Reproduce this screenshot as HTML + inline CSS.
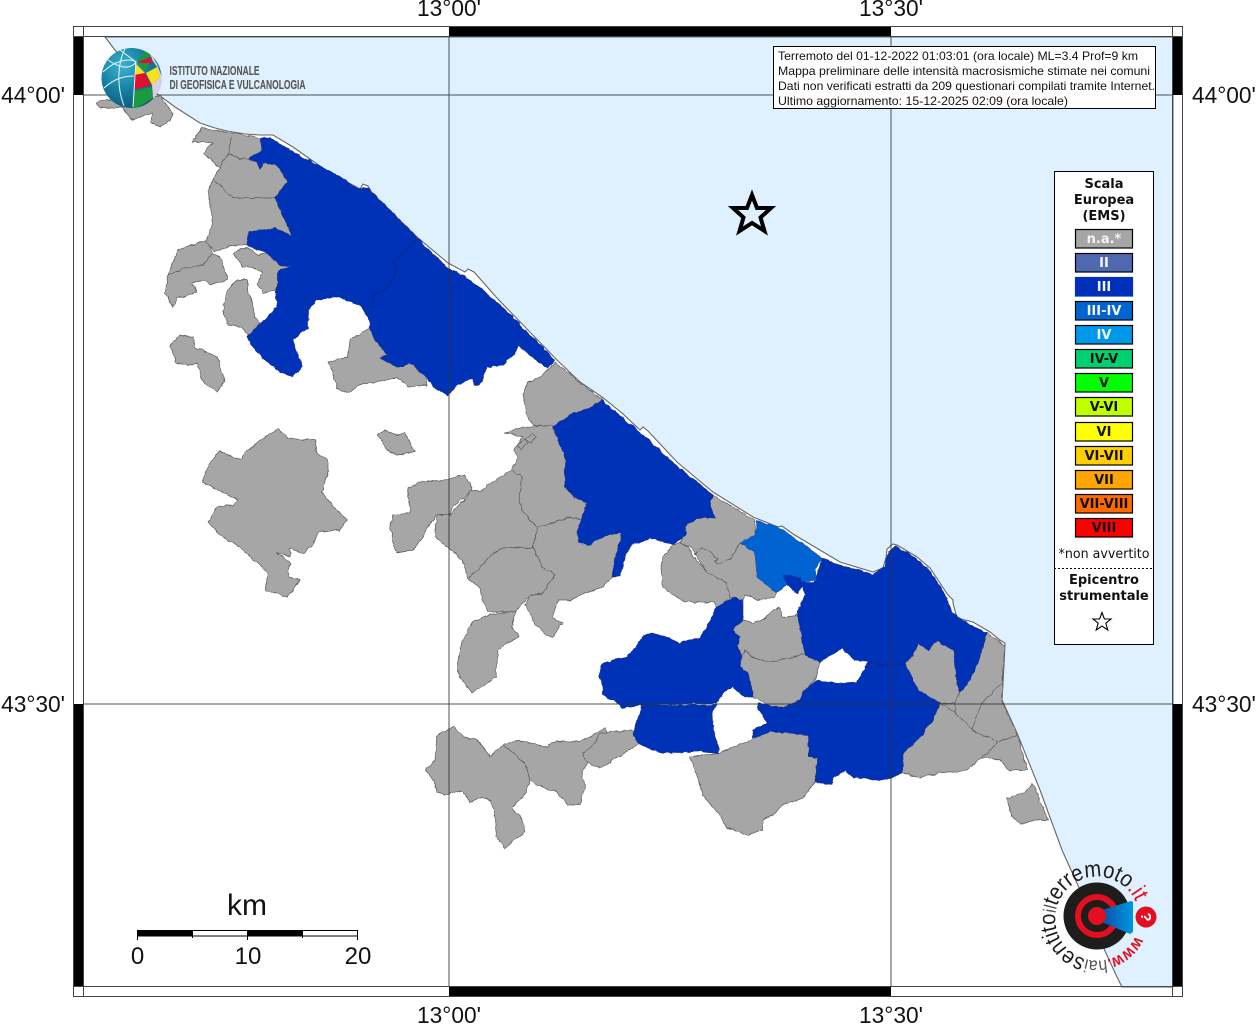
<!DOCTYPE html>
<html><head><meta charset="utf-8"><style>
html,body{margin:0;padding:0;background:#fff;width:1256px;height:1024px;overflow:hidden}
svg{display:block}
</style></head><body>
<svg xmlns="http://www.w3.org/2000/svg" width="1256" height="1024" viewBox="0 0 1256 1024" font-family="'Liberation Sans',sans-serif">
<defs>
<radialGradient id="gl" cx="35%" cy="30%" r="80%"><stop offset="0" stop-color="#3cb4cf"/><stop offset=".55" stop-color="#127a9f"/><stop offset="1" stop-color="#0b5570"/></radialGradient>
<linearGradient id="cone" x1="0" x2="1" y1="0" y2="0"><stop offset="0" stop-color="#0a4fa8"/><stop offset="1" stop-color="#0098e0"/></linearGradient>
<clipPath id="gc"><circle cx="131.5" cy="78" r="30"/></clipPath>
<filter id="rough" filterUnits="userSpaceOnUse" x="0" y="0" width="1256" height="1024">
<feTurbulence type="fractalNoise" baseFrequency=".16" numOctaves="2" seed="4" result="n"/>
<feDisplacementMap in="SourceGraphic" in2="n" scale="3.5" xChannelSelector="R" yChannelSelector="G"/>
</filter>
</defs>
<rect width="1256" height="1024" fill="#fff"/>
<!-- sea -->
<path fill="#dff1ff" stroke="#666" stroke-width="1.1" d="M105,37 115,50 125,62 140,80 160,96 175,107 200,123 215,128 227,131 245,134 260,135 273,135 293,147 327,171 360,189 363,184 368,186 372,193 417,237 448,263 465,272 468,269 474,272 497,298 557,360 580,382 602,397 622,413 640,430 643,427 648,431 677,462 713,492 753,517 778,527 782,526 793,534 840,562 873,572 883,568 886,558 887,549 893,544 897,545 917,557 930,568 948,595 953,600 953,603 957,618 973,622 990,632 1000,640 1005,643 1004,665 1002,700 1017,733 1040,790 1062,850 1080,890 1100,940 1117,977 1122,987 1173,987 1173,37Z"/>
<g filter="url(#rough)">
<!-- gray -->
<g fill="#a6a6a6" stroke="#5c5c5c" stroke-width=".7" stroke-linejoin="round">
<path d="M97,103 102,100 130,100 160,96 173,113 170,120 160,127 150,122 153,113 140,117 132,120 125,112 123,107 112,108 100,108Z"/>
<path d="M192,142 202,128 227,132 260,138 262,150 249,159 240,159 228,153 220,168 203,153 213,143 202,142Z"/>
<path d="M228,153 240,159 249,159 257,162 260,170 263,163 277,165 288,182 275,198 292,236 275,228 249,232 247,245 233,245 215,252 205,242 213,223 208,190 213,180Z"/>
<path d="M205,240 178,250 168,275 165,293 173,307 177,298 188,295 197,292 192,283 205,280 210,285 228,280 220,257 213,253Z"/>
<path d="M233,253 247,247 258,255 267,253 280,265 292,267 278,270 278,283 275,290 263,293 257,283 262,273 253,267 243,267Z"/>
<path d="M228,290 237,280 247,280 248,293 252,302 255,317 260,323 250,337 242,327 228,325 223,310Z"/>
<path d="M170,345 180,335 193,337 195,347 218,357 225,382 217,392 203,382 197,363 187,365 175,362 173,352Z"/>
<path d="M328,362 348,357 350,340 370,328 373,337 387,355 380,358 397,367 410,363 427,377 427,385 408,387 397,377 373,383 360,385 347,393 337,388 333,373Z"/>
<path d="M555,362 548,370 540,377 527,383 523,395 525,403 527,415 533,425 553,427 568,422 573,413 590,408 602,400 580,382Z"/>
<path d="M505,433 523,427 553,425 565,453 565,487 575,498 586,502 583,520 570,517 538,528 523,513 519,498 522,477 511,470 518,457 514,450 523,437Z"/>
<path d="M408,488 420,482 443,480 465,475 472,490 453,507 450,515 437,515 427,528 423,537 413,550 397,553 393,543 390,527 393,515 410,513Z"/>
<path d="M437,515 450,515 472,490 480,491 511,470 522,477 519,498 523,513 538,528 533,547 523,548 508,547 498,550 487,560 468,579 462,560 453,552 435,537Z"/>
<path d="M468,579 487,560 498,550 508,547 523,548 533,548 542,567 555,575 543,593 530,595 515,612 488,612 482,600 480,588Z"/>
<path d="M533,547 538,528 570,517 583,520 577,535 583,545 593,537 622,533 615,560 612,577 603,587 585,593 570,600 558,600 552,618 563,623 552,638 537,627 525,605 530,595 543,593 555,575 542,567Z"/>
<path d="M472,622 490,615 515,611 512,627 519,637 507,643 498,650 496,677 480,688 472,693 460,677 457,665 462,642Z"/>
<path d="M202,482 210,462 220,451 240,460 245,453 260,440 278,429 288,438 315,440 317,453 328,460 328,470 322,492 330,503 347,520 340,530 318,532 313,545 303,553 290,548 290,557 277,552 290,563 288,577 300,580 288,597 265,590 268,573 260,565 237,545 220,535 208,523 217,507 233,505 238,500 228,495 215,488Z"/>
<path d="M378,435 385,430 395,435 405,433 415,452 397,455 387,450Z"/>
<path d="M425,770 435,760 437,735 453,727 465,737 478,740 490,757 503,745 525,763 530,780 525,795 512,808 522,820 525,832 505,848 497,837 495,813 490,800 482,797 470,802 462,790 445,795 437,792 435,782Z"/>
<path d="M503,745 517,740 547,747 552,742 580,742 605,728 608,733 592,747 582,753 588,763 582,773 585,787 580,805 568,805 557,792 537,785 530,780 525,763Z"/>
<path d="M582,753 592,747 600,733 632,730 640,743 618,757 600,768 588,763Z"/>
<path d="M713,495 755,520 755,535 740,543 732,557 718,565 715,562 717,558 702,547 697,550 695,555 692,547 680,543 685,525 702,517 715,518 710,503Z"/>
<path d="M673,545 663,557 661,568 663,588 685,602 713,602 717,608 732,597 727,583 707,572 693,557 689,547 680,543Z"/>
<path d="M695,555 702,547 717,558 715,562 718,565 732,557 740,543 755,553 757,577 777,593 775,597 757,600 745,595 743,600 730,597 727,583 707,572Z"/>
<path d="M743,620 753,623 765,618 773,610 780,608 783,617 797,615 801,627 805,653 790,658 770,662 753,658 745,650 741,657 737,647 740,637 732,630Z"/>
<path d="M741,657 745,650 753,658 770,662 790,658 805,653 820,662 815,680 805,690 800,700 783,708 768,705 753,697 748,673 740,667Z"/>
<path d="M905,663 913,655 918,643 928,650 937,641 953,650 957,683 960,693 955,703 940,703 918,690Z"/>
<path d="M987,633 1005,647 1003,663 1002,703 1017,733 1027,770 1008,770 1000,760 982,757 967,770 940,773 920,777 902,773 903,753 918,740 933,720 940,703 955,703 960,693 970,680 978,663Z"/>
<path d="M1007,798 1025,792 1033,783 1048,820 1035,820 1022,824 1012,817Z"/>
<path d="M690,757 718,753 730,748 752,740 753,738 770,732 790,733 808,735 809,757 818,758 815,782 803,798 783,805 773,815 763,820 763,830 747,835 727,828 718,813 702,795 698,778Z"/>
</g>
<g fill="none" stroke="#5c5c5c" stroke-width=".7">
<path d="M232,137 228,153"/><path d="M213,180 232,197 247,198 275,198"/><path d="M168,275 185,268 203,265 213,253"/>
<path d="M940,703 955,712 972,730 998,742 1017,735"/><path d="M955,712 955,703"/><path d="M972,730 982,703 1002,683"/><path d="M982,757 998,742"/>
<path d="M525,439l7,-5 4,3-5,6zM517,445l8,-5 3,3-7,6z"/>
</g>
<!-- blue -->
<g fill="#0030b8" stroke="#1a2f8a" stroke-width=".6" stroke-linejoin="round">
<path d="M260,138 270,138 293,152 333,173 357,188 368,188 387,207 417,238 448,268 468,278 497,302 555,360 547,369 518,346 513,355 503,365 487,367 482,382 475,386 472,378 457,385 448,395 433,387 427,377 410,363 398,367 387,362 380,358 387,355 373,337 370,328 368,317 362,307 348,300 333,297 317,300 308,310 308,328 293,340 297,353 303,367 292,377 280,372 263,358 255,350 247,337 260,323 267,318 277,307 275,290 278,283 278,270 292,267 280,265 267,253 257,250 247,245 249,232 275,228 292,236 275,198 288,182 277,165 263,163 260,170 257,162 249,158 262,150Z"/>
<path d="M602,400 643,435 677,466 713,495 710,503 715,518 702,517 687,524 685,535 673,545 650,538 632,545 625,557 620,577 612,577 615,560 622,533 607,535 588,545 578,542 577,533 587,503 575,497 565,487 565,457 553,427 573,413 590,408Z"/>
<path d="M598,677 603,663 627,657 635,648 642,637 652,633 667,637 680,643 700,638 717,607 733,598 743,600 743,620 732,630 740,637 737,647 742,657 740,667 748,673 753,697 745,698 733,687 723,692 717,703 640,705 623,708 618,703 603,695 602,680Z"/>
<path d="M642,705 717,705 712,713 713,730 719,748 718,753 697,751 663,753 640,745 633,735Z"/>
<path d="M822,558 840,565 873,574 885,566 888,552 895,546 917,559 930,571 947,597 952,613 967,623 987,633 978,663 970,680 960,693 957,683 953,650 937,641 928,650 918,643 913,655 905,663 890,666 868,662 855,660 842,648 820,662 805,655 800,627 797,613 805,595 803,587 797,593 785,583 782,575 802,577 803,582 815,582Z"/>
<path d="M817,680 827,682 840,683 857,682 868,662 890,666 905,663 918,690 940,703 933,720 918,740 903,753 902,773 883,780 873,780 865,778 853,778 845,770 833,778 832,785 815,782 818,758 809,757 808,735 790,733 770,732 753,738 752,730 767,723 757,708 757,703 768,705 783,708 800,700 805,690Z"/>
<path d="M782,575 802,577 803,582 797,593 785,583Z"/>
</g>
<path fill="#0064d2" stroke="#2a4f9a" stroke-width=".6" stroke-linejoin="round" d="M757,521 778,527 793,537 822,558 815,570 817,580 802,582 802,577 782,575 787,583 777,593 757,577 755,553 740,543 755,535Z"/>
<path fill="none" stroke="#14256f" stroke-width=".8" d="M417,240 405,252 393,262 397,272 387,288 373,295 372,307 362,307"/>
<path fill="none" stroke="#14256f" stroke-width=".8" d="M868,662 890,666 905,663"/>
</g>
<!-- grid -->
<g stroke="#333" stroke-width="1" opacity=".85" fill="none">
<path d="M449,36V987M891,36V987M83,95H1173M83,704H1173"/>
</g>
<!-- frame -->
<rect x="73" y="36" width="10" height="59" fill="#000"/><rect x="73" y="704" width="10" height="283" fill="#000"/>
<rect x="1173" y="36" width="10" height="59" fill="#000"/><rect x="1173" y="704" width="10" height="283" fill="#000"/>
<rect x="449" y="26" width="442" height="10" fill="#000"/><rect x="449" y="987" width="442" height="10" fill="#000"/>
<rect x="73.5" y="26.5" width="1109" height="970" fill="none" stroke="#444" stroke-width="1"/>
<rect x="83.5" y="36.5" width="1089" height="950" fill="none" stroke="#444" stroke-width="1"/>
<path d="M83.5,26.5V36.5M1172.5,26.5V36.5M83.5,986.5V996.5M1172.5,986.5V996.5M73.5,36.5H83.5M1172.5,36.5H1183M73.5,986.5H83.5M1172.5,986.5H1183" stroke="#444" fill="none"/>
<!-- labels -->
<g font-size="22.7" fill="#111">
<text x="449" y="16" text-anchor="middle">13°00'</text><text x="891" y="16" text-anchor="middle">13°30'</text>
<text x="449" y="1023" text-anchor="middle">13°00'</text><text x="891" y="1023" text-anchor="middle">13°30'</text>
<text x="65" y="103" text-anchor="end">44°00'</text><text x="65" y="712" text-anchor="end">43°30'</text>
<text x="1192" y="103">44°00'</text><text x="1192" y="712">43°30'</text>
</g>
<!-- INGV logo -->
<g>
<circle cx="131.5" cy="78" r="30" fill="url(#gl)"/>
<g clip-path="url(#gc)">
<path d="M150,52 157,64 163,80 158,96 153,98 152,85 160,77 157,67 151,58Z" fill="#d9cfe0"/>
<path d="M136,62 146,50 151,56Z" fill="#1a9a3c"/>
<path d="M137,62 152,57 151,65Z" fill="#e00f2c"/>
<path d="M138,63 150,63 145,72Z" fill="#1a9a3c"/>
<path d="M135,63 145,73 136,75Z" fill="#f4e21a"/>
<path d="M146,73 157,67 160,77 152,85Z" fill="#f4e21a"/>
<path d="M134,75 145,73 151,85 134,90Z" fill="#e00f2c"/>
<path d="M133,92 151,87 153,98 140,106 133,109Z" fill="#1a9a3c"/>
</g>
<g fill="none" stroke="#e9f6fa" stroke-width="1" clip-path="url(#gc)">
<path d="M136,61 133,107M103,72C115,60 130,58 136,62M108,60C120,68 130,70 136,62M125,49C118,62 116,85 124,106M104,88C115,78 125,76 134,76M120,50 136,62"/>
</g>
<g fill="#555" font-weight="bold" font-size="13" stroke="#555" stroke-width=".1">
<text x="169.5" y="75" textLength="90" lengthAdjust="spacingAndGlyphs">ISTITUTO NAZIONALE</text>
<text x="169.5" y="89" textLength="136" lengthAdjust="spacingAndGlyphs">DI GEOFISICA E VULCANOLOGIA</text>
</g>
</g>
<!-- info box -->
<rect x="773.5" y="46.5" width="382" height="62" fill="#fff" stroke="#000" stroke-width="1"/>
<g font-size="12" fill="#111">
<text x="778" y="60" textLength="360" lengthAdjust="spacingAndGlyphs">Terremoto del 01-12-2022 01:03:01 (ora locale) ML=3.4 Prof=9 km</text>
<text x="778" y="75" textLength="372" lengthAdjust="spacingAndGlyphs">Mappa preliminare delle intensità macrosismiche stimate nei comuni</text>
<text x="778" y="90" textLength="377" lengthAdjust="spacingAndGlyphs">Dati non verificati estratti da 209 questionari compilati tramite Internet.</text>
<text x="778" y="105" textLength="290" lengthAdjust="spacingAndGlyphs">Ultimo aggiornamento: 15-12-2025 02:09 (ora locale)</text>
</g>
<!-- epicenter star -->
<path d="M752,195 757,208 771,208 760.5,217.5 764.5,231 752,223 739.5,231 743.5,217.5 733,208 747,208Z" fill="none" stroke="#000" stroke-width="4" stroke-linejoin="miter"/>
<!-- legend -->
<rect x="1054.5" y="171.5" width="99" height="473" fill="#fff" stroke="#000" stroke-width="1"/>
<g font-family="'DejaVu Sans',sans-serif" font-size="13" font-weight="bold" text-anchor="middle" fill="#111">
<text x="1104" y="188">Scala</text><text x="1104" y="204">Europea</text><text x="1104" y="220">(EMS)</text>
<g stroke="#000" stroke-width="1.2">
<rect x="1075.5" y="229.5" width="57" height="18.5" fill="#a6a6a6"/>
<rect x="1075.5" y="253.5" width="57" height="18.5" fill="#4f69b0"/>
<rect x="1075.5" y="277.5" width="57" height="18.5" fill="#0030b8" stroke="#0030b8"/>
<rect x="1075.5" y="301.5" width="57" height="18.5" fill="#0064d2"/>
<rect x="1075.5" y="325.5" width="57" height="18.5" fill="#0098e8"/>
<rect x="1075.5" y="349.5" width="57" height="18.5" fill="#00d070"/>
<rect x="1075.5" y="373.5" width="57" height="18.5" fill="#00ff00"/>
<rect x="1075.5" y="397.5" width="57" height="18.5" fill="#c0ff00"/>
<rect x="1075.5" y="422.5" width="57" height="18.5" fill="#ffff00"/>
<rect x="1075.5" y="446.5" width="57" height="18.5" fill="#ffd000"/>
<rect x="1075.5" y="470.5" width="57" height="18.5" fill="#ffa500"/>
<rect x="1075.5" y="494.5" width="57" height="18.5" fill="#ff6a00"/>
<rect x="1075.5" y="518.5" width="57" height="18.5" fill="#ff0000"/>
</g>
<g fill="#f4f4f4">
<text x="1104" y="243">n.a.*</text><text x="1104" y="267">II</text><text x="1104" y="291">III</text><text x="1104" y="315">III-IV</text><text x="1104" y="339">IV</text>
</g>
<text x="1104" y="363">IV-V</text><text x="1104" y="387">V</text><text x="1104" y="411">V-VI</text><text x="1104" y="436">VI</text><text x="1104" y="460">VI-VII</text><text x="1104" y="484">VII</text><text x="1104" y="508">VII-VIII</text><text x="1104" y="532">VIII</text>
<text x="1104" y="558" font-weight="normal" textLength="91" lengthAdjust="spacingAndGlyphs">*non avvertito</text>
<text x="1104" y="584">Epicentro</text><text x="1104" y="600">strumentale</text>
</g>
<path d="M1054,568.5H1152" stroke="#000" stroke-dasharray="2 2" fill="none"/>
<path d="M1102,612.5 1104.4,619 1111,619 1105.8,623.2 1107.8,630 1102,626 1096.2,630 1098.2,623.2 1093,619 1099.6,619Z" fill="#fff" stroke="#000" stroke-width="1.1"/>
<!-- scale bar -->
<rect x="137.5" y="930.5" width="220" height="5.5" fill="#fff" stroke="#000" stroke-width="1"/>
<rect x="137" y="930" width="56" height="6" fill="#000"/><rect x="247" y="930" width="55" height="6" fill="#000"/>
<path d="M137.5,930V940M192.5,930V938M247.5,930V940M302.5,930V938M357.5,930V940" stroke="#000" fill="none"/>
<g fill="#111" text-anchor="middle">
<text x="247" y="915" font-size="30">km</text>
<text x="137.5" y="964" font-size="24">0</text><text x="248" y="964" font-size="24">10</text><text x="358" y="964" font-size="24">20</text>
</g>
<!-- terremoto logo -->
<g>
<circle cx="1097" cy="916" r="33.5" fill="#1d1d1b"/>
<circle cx="1097" cy="916" r="19" fill="none" stroke="#e30f20" stroke-width="6"/>
<path d="M1102,910 1131,901 1133,902 1133,932 1130,934 1102,922Z" fill="url(#cone)"/>
<circle cx="1097" cy="916" r="9" fill="#e30f20"/>
<circle cx="1146" cy="917" r="10.5" fill="#e30f20"/>
<text x="1146" y="922" font-size="15" font-weight="bold" fill="#fff" text-anchor="middle" transform="rotate(90 1146 917)">?</text>
<path id="circ" fill="none" d="M1135.4,936 A42,42 0 1 1 1139,915"/>
<text font-size="23" fill="#1d1d1b"><textPath href="#circ" textLength="228" lengthAdjust="spacingAndGlyphs"><tspan fill="#e30f20" font-weight="bold" font-size="17">www.</tspan><tspan fill="#555" font-size="18">hai</tspan>sentito<tspan fill="#555" font-size="18">il</tspan>terremoto<tspan fill="#e30f20">.it</tspan></textPath></text>
</g>
</svg>
</body></html>
